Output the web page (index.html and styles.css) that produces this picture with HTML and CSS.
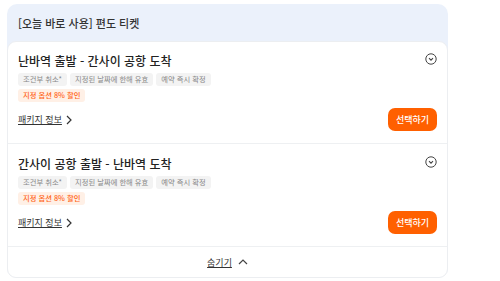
FILE: index.html
```html
<!DOCTYPE html>
<html lang="ko">
<head>
  <meta charset="UTF-8" />
  <title>편도 티켓</title>
  <link rel="stylesheet" href="styles.css">
</head>
<body>
  <div class="ticket-box">
    <div class="ticket-head">[오늘 바로 사용] 편도 티켓</div>
    <div class="ticket-list">
      <div class="option">
        <div class="option-top">
          <h3>난바역 출발 - 간사이 공항 도착</h3>
          <svg class="toggle" width="12" height="12" viewBox="0 0 12 12"><circle cx="6" cy="6" r="5.2" fill="none" stroke="#444" stroke-width="1"/><path d="M4 5.2 L6 7.2 L8 5.2" fill="none" stroke="#444" stroke-width="1.1"/></svg>
        </div>
        <div class="tags">
          <span class="tag">조건부 취소*</span>
          <span class="tag">지정된 날짜에 한해 유효</span>
          <span class="tag">예약 즉시 확정</span>
        </div>
        <div class="tags">
          <span class="tag sale">지정 옵션 8% 할인</span>
        </div>
        <div class="option-bottom">
          <a class="info">패키지 정보</a>
          <svg class="arrow" width="6" height="10" viewBox="0 0 6 10"><path d="M1 1 L5 5 L1 9" fill="none" stroke="#333" stroke-width="1.2"/></svg>
          <button class="select">선택하기</button>
        </div>
      </div>
      <div class="option">
        <div class="option-top">
          <h3>간사이 공항 출발 - 난바역 도착</h3>
          <svg class="toggle" width="12" height="12" viewBox="0 0 12 12"><circle cx="6" cy="6" r="5.2" fill="none" stroke="#444" stroke-width="1"/><path d="M4 5.2 L6 7.2 L8 5.2" fill="none" stroke="#444" stroke-width="1.1"/></svg>
        </div>
        <div class="tags">
          <span class="tag">조건부 취소*</span>
          <span class="tag">지정된 날짜에 한해 유효</span>
          <span class="tag">예약 즉시 확정</span>
        </div>
        <div class="tags">
          <span class="tag sale">지정 옵션 8% 할인</span>
        </div>
        <div class="option-bottom">
          <a class="info">패키지 정보</a>
          <svg class="arrow" width="6" height="10" viewBox="0 0 6 10"><path d="M1 1 L5 5 L1 9" fill="none" stroke="#333" stroke-width="1.2"/></svg>
          <button class="select">선택하기</button>
        </div>
      </div>
      <div class="hide-row">
        <a class="hide">숨기기</a>
        <svg width="10" height="6" viewBox="0 0 10 6"><path d="M1 5 L5 1 L9 5" fill="none" stroke="#444" stroke-width="1.2"/></svg>
      </div>
    </div>
  </div>
</body>
</html>
```

FILE: styles.css
```css
body {
  margin: 0;
  background: #fff;
  font-family: "Noto Sans CJK KR", "Noto Sans", sans-serif;
  color: #333;
}
.ticket-box {
  width: 441px;
  margin: 4px 0 0 7px;
  background: #ebf1fb;
  border-radius: 10px;
}
.ticket-head {
  height: 37px;
  padding-left: 11px;
  display: flex;
  align-items: center;
  font-size: 11px;
  font-weight: 500;
  color: #333;
}
.ticket-list {
  background: #fff;
  border: 1px solid #eceef1;
  border-radius: 9px;
}
.option {
  padding: 10px 10px 12px 10px;
  border-bottom: 1px solid #eef0f2;
}
.option + .option {
  padding-top: 11px;
}
.option-top {
  display: flex;
  justify-content: space-between;
  align-items: flex-start;
}
.option-top h3 {
  margin: 0;
  font-size: 12px;
  font-weight: 500;
  color: #222;
  line-height: 18px;
}
.toggle {
  margin-top: 1px;
}
.tags {
  display: flex;
  gap: 3px;
  margin-top: 3px;
}
.tag {
  background: #f3f3f3;
  color: #888;
  font-size: 7.3px;
  line-height: 13px;
  padding: 0 5px;
  border-radius: 3px;
}
.tag.sale {
  background: #fff0e6;
  color: #ff6416;
  font-weight: 500;
}
.option-bottom {
  display: flex;
  align-items: center;
  margin-top: 6px;
}
.info {
  font-size: 9px;
  color: #333;
  text-decoration: underline;
  margin-right: 4px;
}
.select {
  margin-left: auto;
  background: #ff6000;
  color: #fff;
  border: none;
  border-radius: 7px;
  font-family: inherit;
  font-size: 9px;
  font-weight: 500;
  width: 49px;
  height: 23px;
  padding: 0;
}
.hide-row {
  height: 30px;
  display: flex;
  align-items: center;
  justify-content: center;
  gap: 6px;
}
.hide {
  font-size: 9px;
  color: #333;
  text-decoration: underline;
}
```
